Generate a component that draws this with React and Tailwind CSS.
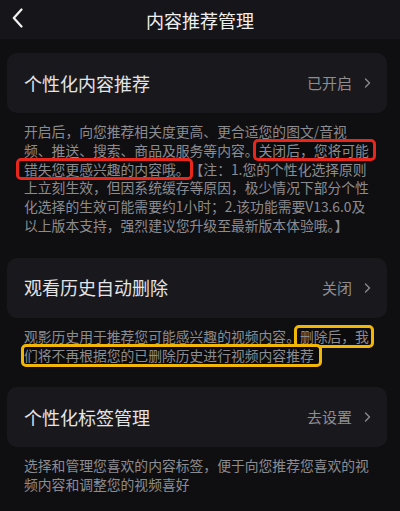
import React from "react";

const sections = [
  {
    title: "个性化内容推荐",
    value: "已开启",
    lines: [
      [{ t: "开启后，向您推荐相关度更高、更合适您的图文/音视" }],
      [
        { t: "频、推送、搜索、商品及服务等内容。" },
        { t: "关闭后，您将可能", mark: "red", cls: "pl-[3px] -ml-[3px] pr-[4px]" },
      ],
      [
        { t: "错失您更感兴趣的内容哦。", mark: "red", cls: "pl-[5px] -ml-[5px]" },
        { t: "【注：1.您的个性化选择原则" },
      ],
      [{ t: "上立刻生效，但因系统缓存等原因，极少情况下部分个性" }],
      [{ t: "化选择的生效可能需要约1小时；2.该功能需要V13.6.0及" }],
      [{ t: "以上版本支持，强烈建议您升级至最新版本体验哦。】" }],
    ],
  },
  {
    title: "观看历史自动删除",
    value: "关闭",
    lines: [
      [
        { t: "观影历史用于推荐您可能感兴趣的视频内容。" },
        { t: "删除后，我", mark: "yellow", cls: "pl-[3px] -ml-[3px] pr-[2px]" },
      ],
      [{ t: "们将不再根据您的已删除历史进行视频内容推荐", mark: "yellow", cls: "pr-[5px]" }],
    ],
  },
  {
    title: "个性化标签管理",
    value: "去设置",
    lines: [
      [{ t: "选择和管理您喜欢的内容标签，便于向您推荐您喜欢的视" }],
      [{ t: "频内容和调整您的视频喜好" }],
    ],
  },
];

const markClass = {
  red: "inline-block leading-[16px] bg-[#0b0b0d] outline-[3px] outline-[#e8261c] rounded-[2px]",
  yellow: "inline-block leading-[17px] bg-[#0b0b0d] outline-[3px] outline-[#f2b705] rounded-[2px]",
};

const Chevron = () => (
  <svg width="7" height="10" viewBox="0 0 7 10" fill="none" className="ml-[12px]">
    <polyline points="1.5,1 5.5,5 1.5,9" stroke="#8a8a8e" strokeWidth="1.4" strokeLinecap="round" strokeLinejoin="round" />
  </svg>
);

export default function App() {
  return (
    <div className="w-[400px] h-[511px] overflow-hidden bg-[#0f0f12] font-['Noto_Sans_CJK_SC','Noto_Sans',sans-serif]">
      {/* Header */}
      <div className="relative h-[39px] bg-[#16161a] flex items-center justify-center">
        <button className="absolute left-[12px] top-[8px]">
          <svg width="11" height="20" viewBox="0 0 11 20" fill="none">
            <polyline points="9.5,1.5 1.8,10 9.5,18.5" stroke="#f2f2f2" strokeWidth="2.2" strokeLinecap="round" strokeLinejoin="round" />
          </svg>
        </button>
        <h1 className="text-[18px] text-[#f0f0f0] leading-none">内容推荐管理</h1>
      </div>

      <div className="pt-[14px] flex flex-col gap-[23px]">
        {sections.map((s) => (
          <div key={s.title}>
            <div className="ml-[7px] w-[380px] h-[60px] rounded-[10px] bg-[#19191d] flex items-center justify-between pl-[17px] pr-[16px]">
              <span className="text-[18px] text-[#e4e4e6]">{s.title}</span>
              <div className="flex items-center">
                <span className="text-[15px] text-[#8e8e92]">{s.value}</span>
                <Chevron />
              </div>
            </div>
            <div className="pl-[24px] pt-[9px] text-[13.8px] leading-[18.8px] text-[#8c8c90]">
              {s.lines.map((line, i) => (
                <div key={i} className="whitespace-nowrap">
                  {line.map((p, j) =>
                    p.mark ? (
                      <span key={j} className={`${markClass[p.mark]} ${p.cls || ""}`}>
                        {p.t}
                      </span>
                    ) : (
                      <span key={j}>{p.t}</span>
                    )
                  )}
                </div>
              ))}
            </div>
          </div>
        ))}
      </div>
    </div>
  );
}
